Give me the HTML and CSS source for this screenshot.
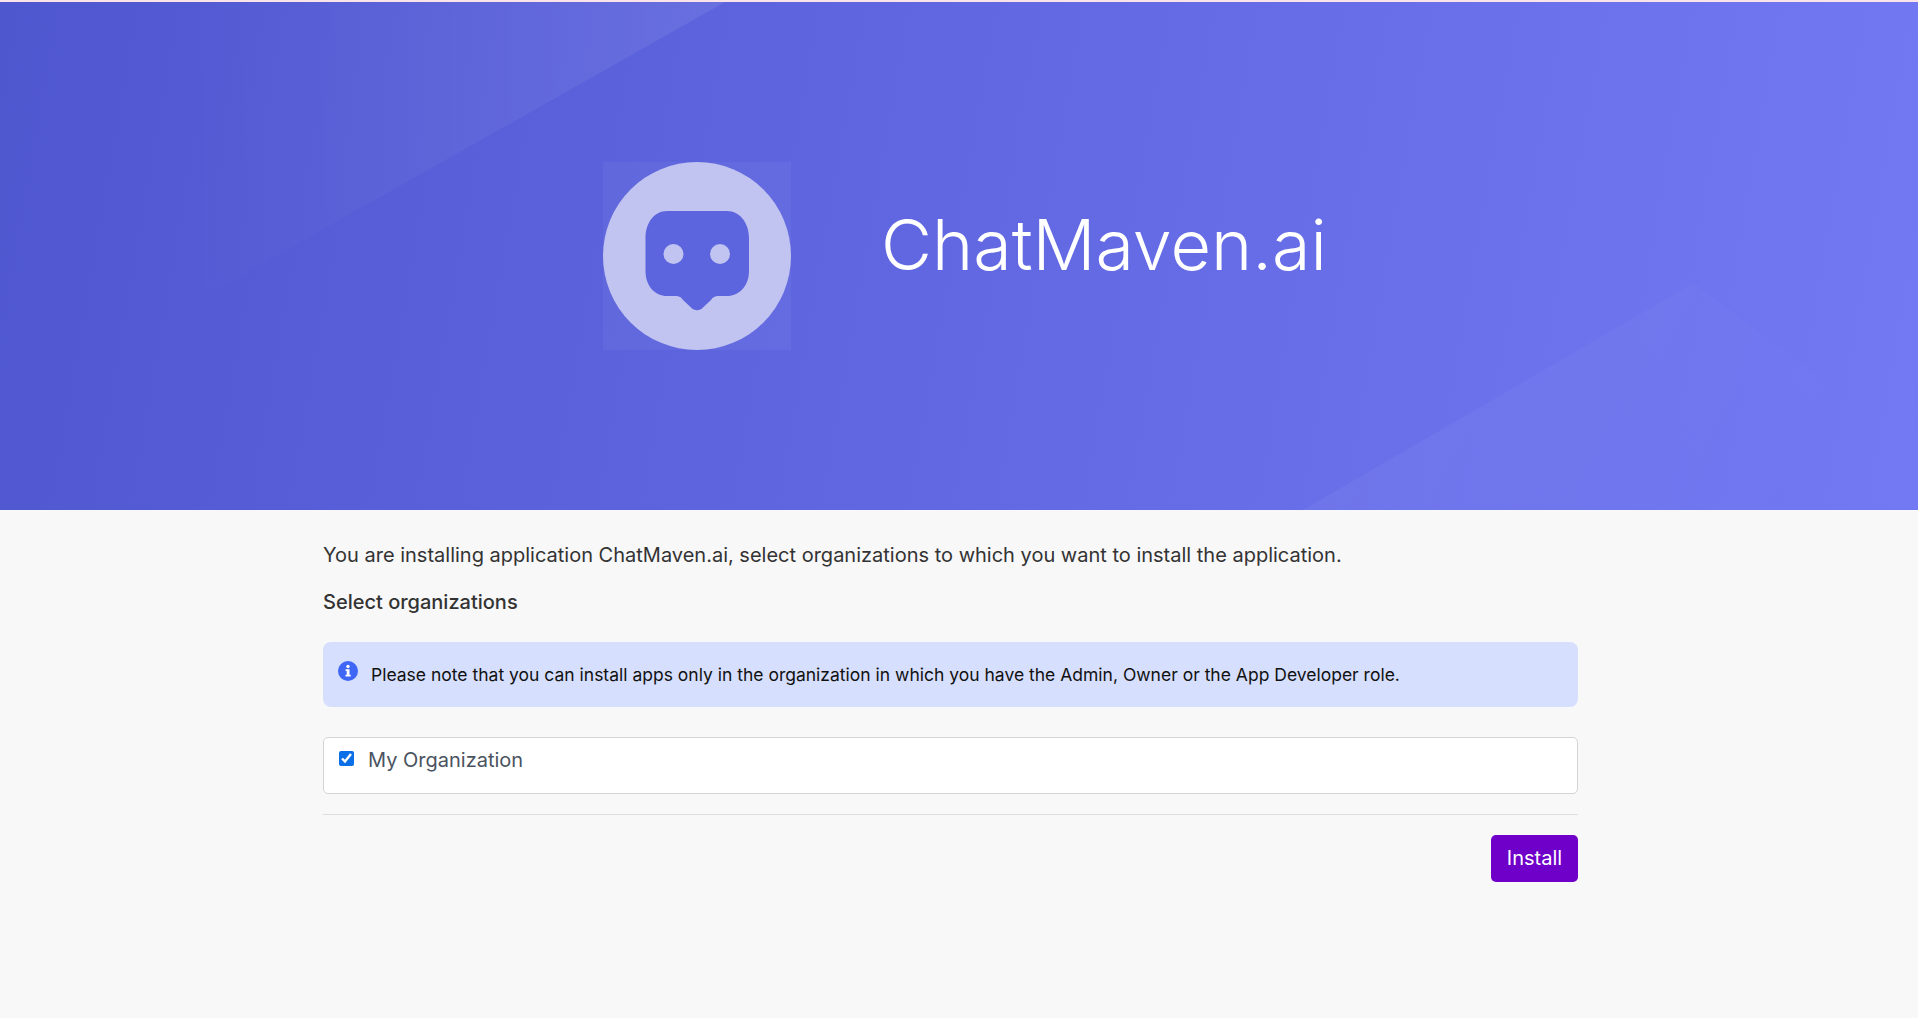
FILE: index.html
```html
<!DOCTYPE html>
<html lang="en">
<head>
    <meta charset="UTF-8">
    <meta name="viewport" content="width=device-width, initial-scale=1.0">
    <title>Install ChatMaven.ai</title>
    <link rel="stylesheet" href="styles.css">
</head>
<body>
    <div class="top-line"></div>

    <!-- Banner -->
    <header class="banner">
        <div class="shine shine-left"></div>
        <div class="shine shine-right"></div>
        <div class="banner-content">
            <svg class="app-logo" viewBox="0 0 188 188" aria-hidden="true">
                <rect width="188" height="188" fill="#fff" fill-opacity="0.04"/>
                <circle cx="94" cy="94" r="94" fill="#c1c4f0"/>
                <path d="M64 49H124C136 49 146 60 146 76V109C146 124 136 134 124 134H115C112 134 110 135 108 138L100 145.500C97 149 91 149 88 145.500L80 138C78 135 76 134 73 134H64C52 134 42.500 124 42.500 109V76C42.500 60 52 49 64 49Z" fill="#5d65de"/>
                <circle cx="70.500" cy="92" r="10" fill="#c1c4f0"/>
                <circle cx="117" cy="92" r="10" fill="#c1c4f0"/>
            </svg>
            <h1 class="app-name">ChatMaven.ai</h1>
        </div>
    </header>

    <!-- Formulario -->
    <main class="install">
        <p class="intro">You are installing application ChatMaven.ai, select organizations to which you want to install the application.</p>
        <h2 class="select-title">Select organizations</h2>

        <div class="notice">
            <svg class="notice-icon" viewBox="0 0 20 20" aria-hidden="true">
                <circle cx="10" cy="10" r="10" fill="#3f66f5"/>
                <circle cx="10" cy="5.500" r="1.700" fill="#fff"/>
                <path d="M7.600 8.300H11.500V13.700H12.700V15.500H7.500V13.700H8.700V10.100H7.600Z" fill="#fff"/>
            </svg>
            <p>Please note that you can install apps only in the organization in which you have the Admin, Owner or the App Developer role.</p>
        </div>

        <div class="org-list">
            <label class="org-item">
                <input type="checkbox" checked>
                <span>My Organization</span>
            </label>
        </div>

        <div class="actions">
            <button class="btn-install" type="button">Install</button>
        </div>
    </main>
</body>
</html>
```

FILE: styles.css
```css
* {
    box-sizing: border-box;
}

body {
    margin: 0;
    min-height: 1018px;
    background-color: #f8f8f8;
    color: #333;
    font-family: 'Inter', sans-serif;
}

.top-line {
    height: 2px;
    background-color: #fbe3ea;
}

/* Banner */
.banner {
    position: relative;
    height: 508px;
    overflow: hidden;
    background: linear-gradient(100deg, #4f57cf 0%, #6066e0 45%, #7379f2 100%);
}

.shine {
    position: absolute;
}

.shine-left {
    top: 0;
    left: 0;
    width: 725px;
    height: 410px;
    background: linear-gradient(90deg, rgba(255, 255, 255, 0) 25%, rgba(255, 255, 255, 0.08) 100%);
    clip-path: polygon(0 0, 100% 0, 0 100%);
}

.shine-right {
    right: 0;
    bottom: 0;
    width: 615px;
    height: 227px;
    background: linear-gradient(115deg, rgba(255, 255, 255, 0.05), rgba(255, 255, 255, 0) 85%);
    clip-path: polygon(0 100%, 63.500% 0, 100% 74%, 100% 100%);
}

.banner-content {
    position: relative;
    display: flex;
    align-items: flex-start;
    padding: 160px 0 0 603px;
}

.app-logo {
    width: 188px;
    height: 188px;
}

.app-name {
    margin: 42px 0 0 90px;
    color: #fff;
    font-size: 70px;
    font-weight: 300;
    line-height: 82px;
}

/* Formulario */
.install {
    width: 1255px;
    margin-left: 323px;
    padding-top: 33px;
}

.intro {
    margin: 0;
    font-size: 20px;
    line-height: 24px;
}

.select-title {
    margin: 23px 0 0;
    font-size: 20px;
    font-weight: 500;
    line-height: 24px;
}

.notice {
    display: flex;
    align-items: flex-start;
    height: 65px;
    margin-top: 28px;
    padding: 19px 15px 0;
    border-radius: 8px;
    background-color: #d6dffd;
    color: #111;
}

.notice-icon {
    flex: none;
    width: 20px;
    height: 20px;
}

.notice p {
    margin: 2px 0 0 13px;
    font-size: 17.500px;
    line-height: 24px;
}

.org-list {
    height: 57px;
    margin-top: 30px;
    padding: 10px 15px;
    border: 1px solid #d4d4d4;
    border-radius: 5px;
    background-color: #fff;
}

.org-item {
    display: flex;
    align-items: flex-start;
    color: #4a5360;
    font-size: 20px;
    line-height: 24px;
}

.org-item input {
    width: 15px;
    height: 15px;
    margin: 3px 14px 0 0;
    accent-color: #0b6fe8;
}

.actions {
    display: flex;
    justify-content: flex-end;
    margin-top: 20px;
    padding-top: 20px;
    border-top: 1px solid #dedede;
}

.btn-install {
    width: 87px;
    height: 47px;
    padding: 0 0 2px;
    border: none;
    border-radius: 5px;
    background-color: #6e00c9;
    color: #fff;
    font-family: inherit;
    font-size: 20px;
    cursor: pointer;
}
```
